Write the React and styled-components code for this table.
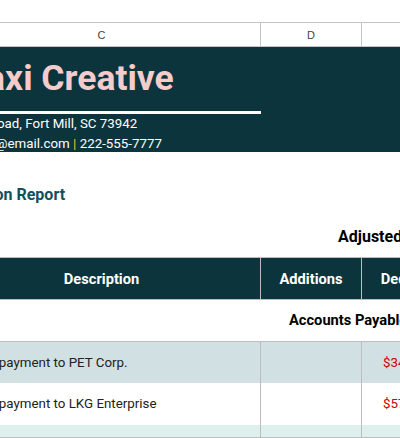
import styled, { createGlobalStyle } from "styled-components";

const GlobalStyle = createGlobalStyle`
  html, body {
    margin: 0;
    padding: 0;
    background: #ffffff;
  }
  body {
    font-family: Roboto, "Liberation Sans", sans-serif;
    color: #222222;
  }
`;

// hidden B | C | D | E  (sheet is scrolled right so B is out of view)
const COLS = "60px 318px 101px 112px";
const GRID = "#bdbdbd";
const DARK = "#0c343d";

const Viewport = styled.div`
  width: 400px;
  height: 438px;
  overflow: hidden;
  padding-top: 22px;
  box-sizing: border-box;
`;

const Sheet = styled.div`
  width: 591px;
  margin-left: -117px; /* scroll offset */
`;

const Row = styled.div`
  display: grid;
  grid-template-columns: ${COLS};
  box-sizing: border-box;
  height: ${(p) => p.$h}px;
  background: ${(p) => p.$bg || "transparent"};
  border-top: ${(p) => (p.$top ? `1px solid ${p.$top}` : "none")};
  border-bottom: ${(p) => (p.$bottom ? `1px solid ${p.$bottom}` : "none")};
`;

const Cell = styled.div`
  box-sizing: border-box;
  grid-column: span ${(p) => p.$span || 1};
  display: flex;
  align-items: ${(p) => p.$valign || "center"};
  justify-content: ${(p) => p.$align || "flex-start"};
  padding-left: ${(p) => p.$pl || 0}px;
  padding-top: ${(p) => p.$pt || 0}px;
  border-right: ${(p) => (p.$line ? `1px solid ${p.$line}` : "none")};
  white-space: nowrap;
  min-width: 0;
`;

const ColLetter = styled(Cell)`
  justify-content: center;
  font-family: "Liberation Sans", Arial, sans-serif;
  font-size: 11px;
  color: #444444;
`;

const Banner = styled.div`
  background: ${DARK};
`;

const TitleCell = styled(Cell)`
  border-bottom: 3px solid #ffffff;
  padding-top: 11px;
`;

const Title = styled.span`
  font-size: 35.5px;
  line-height: 40px;
  font-weight: 700;
  color: #f4cccc;
`;

const InfoLine = styled.span`
  font-size: 13.33px;
  line-height: 19px;
  color: #ffffff;
`;

const Pipe = styled.span`
  color: #f1c232;
`;

const SubTitle = styled.span`
  font-size: 16px;
  line-height: 20px;
  font-weight: 700;
  color: #134f5c;
`;

const SectionLabel = styled.span`
  font-size: ${(p) => p.$size}px;
  line-height: 20px;
  font-weight: 700;
  color: #000000;
`;

const HeadLabel = styled.span`
  font-size: 14.67px;
  line-height: 20px;
  font-weight: 700;
  color: #ffffff;
`;

const Text = styled.span`
  font-size: 13.33px;
  line-height: 20px;
  color: #222222;
`;

const Amount = styled(Text)`
  color: #cc0000;
`;

const entries = [
  { desc: "Partial payment to PET Corp.", amount: "$345.00", bg: "#d0e0e3" },
  { desc: "Partial payment to LKG Enterprise", amount: "$575.00", bg: "#ffffff" },
];

export default function App() {
  return (
    <>
      <GlobalStyle />
      <Viewport>
        <Sheet>
          <Row $h={25} $top="#c4c4c4" $bottom="#c4c4c4">
            <ColLetter $line="#c4c4c4">B</ColLetter>
            <ColLetter $line="#c4c4c4">C</ColLetter>
            <ColLetter $line="#c4c4c4">D</ColLetter>
            <ColLetter>E</ColLetter>
          </Row>

          <Banner>
            <Row $h={67}>
              <TitleCell $span={2} $pl={72} $valign="flex-start">
                <Title>Maxi Creative</Title>
              </TitleCell>
            </Row>
            <Row $h={19}>
              <Cell $span={3} $pl={73}>
                <InfoLine>Main Road, Fort Mill, SC 73942</InfoLine>
              </Cell>
            </Row>
            <Row $h={19}>
              <Cell $span={3} $pl={73} $pt={1} $valign="flex-start">
                <InfoLine>
                  design@email.com <Pipe>|</Pipe> 222-555-7777
                </InfoLine>
              </Cell>
            </Row>
          </Banner>

          <Row $h={60}>
            <Cell $pl={27} $pt={33} $valign="flex-start">
              <SubTitle>Reconciliation Report</SubTitle>
            </Cell>
          </Row>

          <Row $h={45}>
            <Cell />
            <Cell />
            <Cell $span={2} $pl={77} $pt={15} $valign="flex-start">
              <SectionLabel $size={16}>Adjusted Balance</SectionLabel>
            </Cell>
          </Row>

          <Row $h={43} $bg={DARK} $top={GRID} $bottom={GRID}>
            <Cell />
            <Cell $align="center" $line={GRID}>
              <HeadLabel>Description</HeadLabel>
            </Cell>
            <Cell $align="center" $line={GRID}>
              <HeadLabel>Additions</HeadLabel>
            </Cell>
            <Cell $align="center">
              <HeadLabel>Deductions</HeadLabel>
            </Cell>
          </Row>

          <Row $h={41}>
            <Cell />
            <Cell />
            <Cell $span={2} $pl={28} $pt={10} $valign="flex-start">
              <SectionLabel $size={14.67}>Accounts Payable</SectionLabel>
            </Cell>
          </Row>

          {entries.map((e, i) => (
            <Row key={e.desc} $h={42} $bg={e.bg} $top={i === 0 ? GRID : null}>
              <Cell />
              <Cell $pl={14} $line={GRID}>
                <Text>{e.desc}</Text>
              </Cell>
              <Cell $line={GRID} />
              <Cell $pl={21}>
                <Amount>{e.amount}</Amount>
              </Cell>
            </Row>
          ))}

          <Row $h={13} $bg="#ddf0ee" $bottom={GRID}>
            <Cell />
            <Cell $line={GRID} />
            <Cell $line={GRID} />
            <Cell />
          </Row>
        </Sheet>
      </Viewport>
    </>
  );
}
